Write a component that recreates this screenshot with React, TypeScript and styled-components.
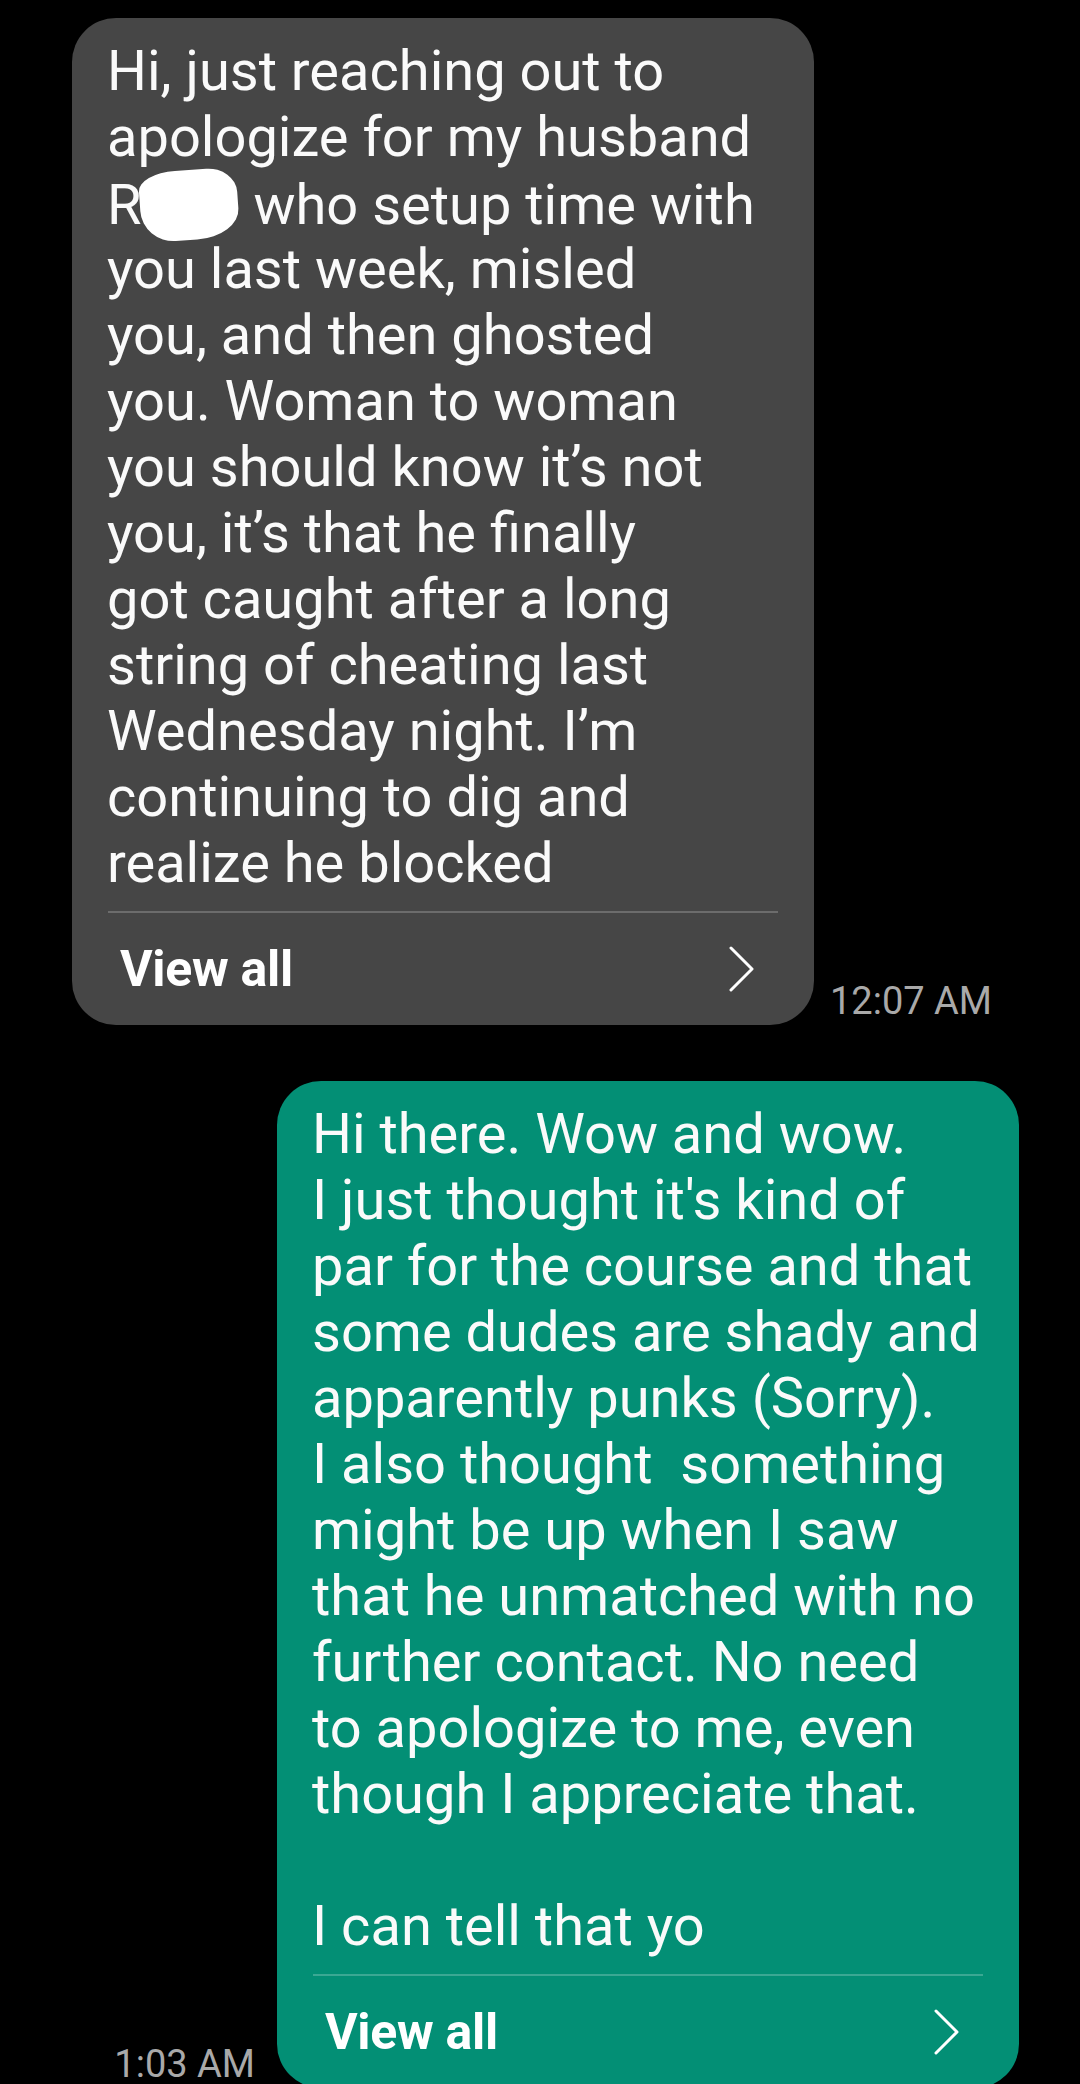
import styled, { createGlobalStyle } from "styled-components";

const GlobalStyle = createGlobalStyle`
  html, body {
    margin: 0;
    padding: 0;
    background: #000;
    height: 2084px;
    overflow: hidden;
  }
  body {
    font-family: Roboto, "Noto Sans", "Liberation Sans", sans-serif;
    -webkit-font-smoothing: antialiased;
  }
`;

const Thread = styled.div`
  display: flex;
  flex-direction: column;
  gap: 56px;
  padding-top: 18px;
`;

const Row = styled.div<{ $sent?: boolean }>`
  display: flex;
  align-items: flex-end;
  justify-content: ${(p) => (p.$sent ? "flex-end" : "flex-start")};
  gap: ${(p) => (p.$sent ? "22px" : "16px")};
  padding: ${(p) => (p.$sent ? "0 61px 0 0" : "0 0 0 72px")};
`;

const Bubble = styled.div<{ $sent?: boolean }>`
  width: 742px;
  box-sizing: border-box;
  background: ${(p) => (p.$sent ? "#038f75" : "#464646")};
  border-radius: 44px;
  padding: 20px 36px 0;
  color: #fafafa;
`;

const Body = styled.div`
  margin-left: -1px;
  font-size: 56px;
  line-height: 66px;
  white-space: pre;
`;

const Line = styled.div`
  height: 66px;
`;

const Blot = styled.span`
  display: inline-block;
  width: 98px;
  height: 70px;
  margin: 0 2px 0 -2px;
  vertical-align: -16px;
  background: #fff;
  border-radius: 38% 30% 44% 34% / 26% 36% 40% 46%;
  transform: rotate(-4deg);
`;

const Divider = styled.div<{ $sent?: boolean }>`
  height: 2px;
  margin-top: 15px;
  background: ${(p) => (p.$sent ? "#3ba893" : "#6c6c6c")};
`;

const Footer = styled.div`
  height: 112px;
  display: flex;
  align-items: center;
  justify-content: space-between;
  padding: 0 23px 0 12px;
`;

const ViewAll = styled.span`
  font-size: 50px;
  font-weight: 700;
  color: #fff;
  letter-spacing: -0.3px;
`;

const Time = styled.span`
  font-size: 38px;
  color: #a9a9a9;
  white-space: nowrap;
  padding-bottom: 2px;
`;

function Chevron() {
  return (
    <svg width="26" height="46" viewBox="0 0 26 46">
      <polyline
        points="2,2 23,23 2,44"
        fill="none"
        stroke="#fff"
        strokeWidth="3"
        strokeLinecap="round"
        strokeLinejoin="round"
      />
    </svg>
  );
}

const received = [
  "Hi, just reaching out to",
  "apologize for my husband",
  null,
  "you last week, misled",
  "you, and then ghosted",
  "you. Woman to woman",
  "you should know it’s not",
  "you, it’s that he finally",
  "got caught after a long",
  "string of cheating last",
  "Wednesday night. I’m",
  "continuing to dig and",
  "realize he blocked",
];

const sent = [
  "Hi there. Wow and wow.",
  "I just thought it's kind of",
  "par for the course and that",
  "some dudes are shady and",
  "apparently punks (Sorry).",
  "I also thought  something",
  "might be up when I saw",
  "that he unmatched with no",
  "further contact. No need",
  "to apologize to me, even",
  "though I appreciate that.",
  "",
  "I can tell that yo",
];

function Message({ lines, sent }: { lines: (string | null)[]; sent?: boolean }) {
  return (
    <Bubble $sent={sent}>
      <Body>
        {lines.map((l, i) =>
          l === null ? (
            <Line key={i}>
              R<Blot /> who setup time with
            </Line>
          ) : (
            <Line key={i}>{l}</Line>
          )
        )}
      </Body>
      <Divider $sent={sent} />
      <Footer>
        <ViewAll>View all</ViewAll>
        <Chevron />
      </Footer>
    </Bubble>
  );
}

export default function App() {
  return (
    <>
      <GlobalStyle />
      <Thread>
        <Row>
          <Message lines={received} />
          <Time>12:07 AM</Time>
        </Row>
        <Row $sent>
          <Time>1:03 AM</Time>
          <Message lines={sent} sent />
        </Row>
      </Thread>
    </>
  );
}
